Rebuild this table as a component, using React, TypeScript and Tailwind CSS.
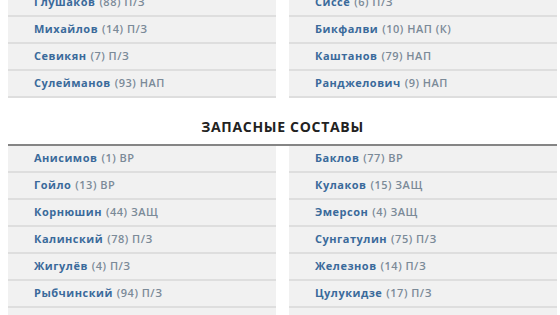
import React from "react";

type P = { name: string; rest: string };

const starters: [P, P][] = [
  [{ name: "Глушаков", rest: "(88) П/З" }, { name: "Сиссе", rest: "(6) П/З" }],
  [{ name: "Михайлов", rest: "(14) П/З" }, { name: "Бикфалви", rest: "(10) НАП (К)" }],
  [{ name: "Севикян", rest: "(7) П/З" }, { name: "Каштанов", rest: "(79) НАП" }],
  [{ name: "Сулейманов", rest: "(93) НАП" }, { name: "Ранджелович", rest: "(9) НАП" }],
];

const bench: [P, P][] = [
  [{ name: "Анисимов", rest: "(1) ВР" }, { name: "Баклов", rest: "(77) ВР" }],
  [{ name: "Гойло", rest: "(13) ВР" }, { name: "Кулаков", rest: "(15) ЗАЩ" }],
  [{ name: "Корнюшин", rest: "(44) ЗАЩ" }, { name: "Эмерсон", rest: "(4) ЗАЩ" }],
  [{ name: "Калинский", rest: "(78) П/З" }, { name: "Сунгатулин", rest: "(75) П/З" }],
  [{ name: "Жигулёв", rest: "(4) П/З" }, { name: "Железнов", rest: "(14) П/З" }],
  [{ name: "Рыбчинский", rest: "(94) П/З" }, { name: "Цулукидзе", rest: "(17) П/З" }],
  [{ name: "Соколов", rest: "(19) П/З" }, { name: "Юсупов", rest: "(7) НАП" }],
];

function Row({ p }: { p: P }) {
  return (
    <div className="h-[27px] bg-[#f1f1f1] border-b-2 border-[#dedede] flex items-center pl-[26px] text-[11px] tracking-[0.5px] whitespace-nowrap">
      <span className="font-bold text-[#3a6a9b]">{p.name}</span>
      <span className="font-semibold text-[#7b8a98] ml-[4px]">{p.rest}</span>
    </div>
  );
}

function Section({ rows }: { rows: [P, P][] }) {
  return (
    <div className="grid grid-cols-2 gap-x-[13px]">
      <div className="flex flex-col">
        {rows.map((r, i) => (
          <Row key={i} p={r[0]} />
        ))}
      </div>
      <div className="flex flex-col">
        {rows.map((r, i) => (
          <Row key={i} p={r[1]} />
        ))}
      </div>
    </div>
  );
}

export default function App() {
  return (
    <div
      className="w-[560px] h-[315px] overflow-hidden bg-white"
      style={{ fontFamily: '"Open Sans", "DejaVu Sans", sans-serif' }}
    >
      <div className="-mt-[10px] pl-[8px] pr-[3px]">
        <Section rows={starters} />
        <div className="pt-[20px] pb-[8px] border-b-2 border-[#858585] text-center text-[14px] leading-[18px] font-bold tracking-[0.7px] text-[#222]">
          ЗАПАСНЫЕ СОСТАВЫ
        </div>
        <Section rows={bench} />
      </div>
    </div>
  );
}
